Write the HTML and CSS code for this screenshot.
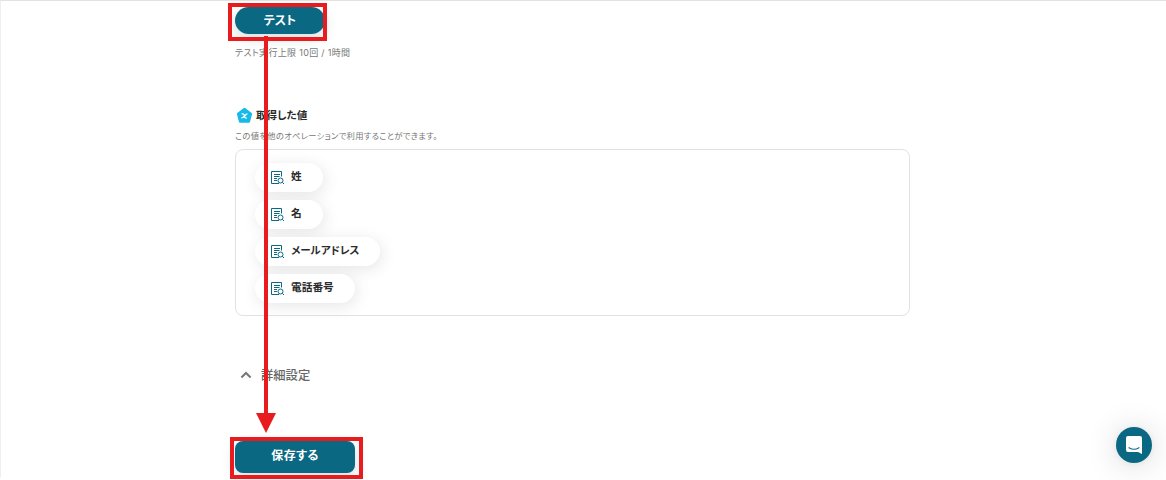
FILE: index.html
```
<!DOCTYPE html>
<html lang="ja">
<head>
<meta charset="utf-8">
<title>オペレーション設定</title>
<link rel="stylesheet" href="styles.css">
</head>
<body>
<svg class="defs" width="0" height="0"><symbol id="record" viewBox="0 0 14 14"><path d="M10.500 5.500V.5H.5v12H8M3 3.500h6M3 5.500h5.500M3 7.500h3M3 9.500h3"/><circle cx="9.500" cy="9.500" r="2.500"/><path d="M11.300 11.300l1.700 1.700"/></symbol></svg>
<main class="page">
  <div class="content">
    <button class="btn btn-test">テスト</button>
    <p class="limit"><span>テスト実行上限 10回 / 1時間</span></p>
    <section class="values">
      <h2 class="heading">
        <svg class="badge" viewBox="0 0 16 16"><path d="M8 1.700L14.200 6.400 12.200 13.800H3.800L1.800 6.400Z" fill="#17b9e8" stroke="#17b9e8" stroke-width="2" stroke-linejoin="round"/><path d="M5.300 6.500c1.900-.5 2.300.4 2.600 1.800s.6 2.400 2.200 2M10.800 6.500C8.800 6.300 7.600 10.600 5 10.300" fill="none" stroke="#fff" stroke-width="1.200"/></svg>
        <span>取得した値</span>
      </h2>
      <p class="note"><span>この値を他のオペレーションで利用することができます。</span></p>
      <div class="panel">
        <div class="chip"><svg class="icon"><use href="#record"/></svg><span>姓</span></div>
        <div class="chip"><svg class="icon"><use href="#record"/></svg><span>名</span></div>
        <div class="chip chip-mail"><svg class="icon"><use href="#record"/></svg><span>メールアドレス</span></div>
        <div class="chip chip-phone"><svg class="icon"><use href="#record"/></svg><span>電話番号</span></div>
      </div>
    </section>
    <div class="advanced"><svg class="chevron" viewBox="0 0 12 8"><path d="M1.400 6.500L6 2l4.600 4.500"/></svg><span>詳細設定</span></div>
    <button class="btn btn-save">保存する</button>
  </div>
</main>
<div class="mark mark-test"></div>
<div class="mark mark-save"></div>
<svg class="arrow" viewBox="0 0 20 397"><path d="M8 0h4v377h8L10 397 0 377h8z" fill="#e81c1f"/></svg>
<div class="chat"><svg viewBox="0 0 18 20"><path d="M3 1h12q2 0 2 2v16l-4-2H3q-2 0-2-2V3q0-2 2-2z" fill="#fff"/><path d="M4 12.700q5 3.200 10 0" fill="none" stroke="#0b6882" stroke-width="1.100" stroke-linecap="round"/></svg></div>
</body>
</html>
```
FILE: styles.css
```
* { box-sizing: border-box; }
body { margin: 0; height: 480px; overflow: hidden; background: #fff; color: #2b2b2b; font-family: "Noto Sans CJK JP", sans-serif; font-feature-settings: "palt"; }
.defs { position: absolute; }
.page { height: 477px; border-top: 1px solid #e2e2e2; border-left: 1px solid #eee; }
.content { width: 675px; margin-left: 234px; padding-top: 6px; display: flex; flex-direction: column; }
.btn { display: flex; align-items: center; justify-content: center; padding: 0 0 2px; border: 0; background: #0b6882; color: #fff; font: bold 12px "Noto Sans CJK JP", sans-serif; font-feature-settings: "palt"; box-shadow: 0 4px 14px rgba(0, 60, 80, .18); }
.btn-test { width: 90px; height: 27px; border-radius: 14px; }
.limit { height: 14px; margin: 12px 0 0; font-family: Inter, "Noto Sans CJK JP", sans-serif; font-size: 9px; letter-spacing: .31px; line-height: 14px; color: #777; white-space: nowrap; }
.values { margin-top: 46px; }
.heading { display: flex; align-items: center; gap: 3px; height: 18px; margin: 0; padding-left: 1px; font-size: 10.600px; line-height: 18px; font-weight: 600; }
.badge { width: 17px; height: 17px; }
.note { height: 14px; margin: 4px 0 0; font-size: 8.300px; letter-spacing: .28px; line-height: 14px; color: #777; white-space: nowrap; }
.panel { height: 167px; margin-top: 7px; padding: 13px 19px 10px; display: flex; flex-direction: column; align-items: flex-start; gap: 8px; border: 1px solid #e2e2e2; border-radius: 8px; }
.chip { display: flex; flex-shrink: 0; align-items: center; gap: 6px; width: 68px; height: 29px; padding-left: 16px; border-radius: 15px; background: #fff; box-shadow: 2px 3px 16px rgba(0, 0, 0, .1); font-size: 10.700px; font-weight: 600; line-height: 18px; white-space: nowrap; }
.chip span { padding-bottom: 3px; }
.chip-mail { width: 125px; font-size: 10.500px; }
.chip-phone { width: 100px; }
.icon { width: 14px; height: 14px; margin-top: 1px; fill: none; stroke: #0b6882; stroke-width: 1; }
.advanced { display: flex; align-items: center; gap: 9px; height: 20px; margin-top: 49px; padding-left: 5px; font-size: 12.300px; line-height: 20px; font-weight: 500; color: #666; }
.chevron { width: 12px; height: 8px; fill: none; stroke: #777; stroke-width: 2; }
.btn-save { width: 120px; height: 32px; margin-top: 56px; padding-bottom: 5px; border-radius: 8px; letter-spacing: .4px; }
.mark { position: absolute; border: 4px solid #e81c1f; }
.mark-test { left: 228px; top: 3px; width: 99px; height: 38px; }
.mark-save { left: 230px; top: 437px; width: 133px; height: 42px; }
.arrow { position: absolute; left: 256px; top: 36px; width: 20px; height: 397px; }
.chat { position: absolute; left: 1116px; top: 427px; width: 36px; height: 36px; display: flex; align-items: center; justify-content: center; border-radius: 50%; background: #0b6882; box-shadow: 0 1px 6px rgba(0, 0, 0, .06), 0 2px 32px rgba(0, 0, 0, .16); }
.chat svg { width: 18px; height: 20px; }
```
